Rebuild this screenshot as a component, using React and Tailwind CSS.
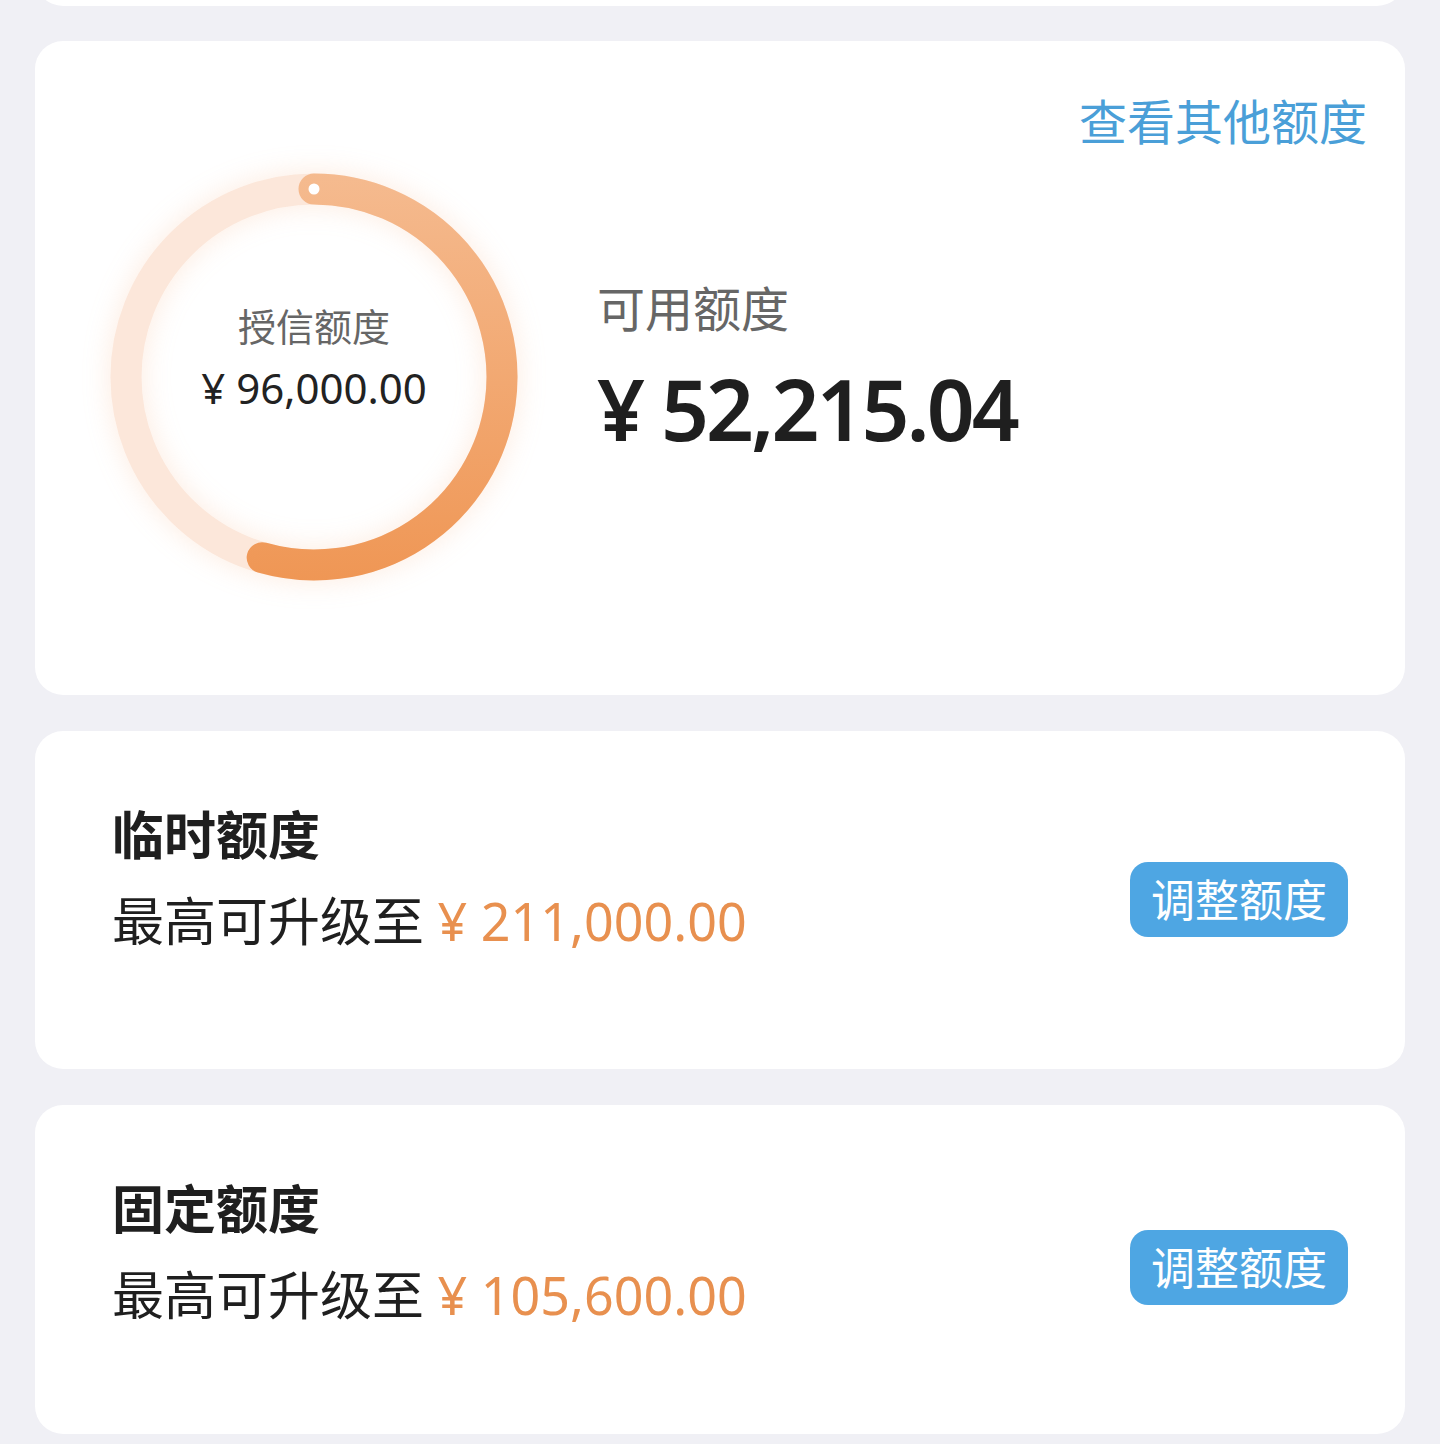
import React from "react";

const font = { fontFamily: '"Noto Sans", "Noto Sans CJK SC", sans-serif' };

function Ring() {
  const cx = 210, cy = 210, r = 188;
  const a = (196 * Math.PI) / 180;
  const ex = cx + r * Math.sin(a);
  const ey = cy - r * Math.cos(a);
  return (
    <svg width="420" height="420" viewBox="0 0 420 420" className="shrink-0 [filter:drop-shadow(0_0_14px_rgba(245,165,110,0.22))]">
      <defs>
        <linearGradient id="arcg" x1="0" y1="0" x2="0" y2="420" gradientUnits="userSpaceOnUse">
          <stop offset="0" stopColor="#f5bb90" />
          <stop offset="1" stopColor="#ef9654" />
        </linearGradient>
      </defs>
      <circle cx={cx} cy={cy} r={r} fill="none" stroke="#fce7da" strokeWidth="31" />
      <path
        d={`M ${cx} ${cy - r} A ${r} ${r} 0 1 1 ${ex} ${ey}`}
        fill="none"
        stroke="url(#arcg)"
        strokeWidth="31"
        strokeLinecap="round"
      />
      <circle cx={cx} cy={cy - r} r="5.5" fill="#ffffff" />
    </svg>
  );
}

function LimitCard({ title, amount, last }) {
  return (
    <div
      className={
        last
          ? "mt-[36px] flex items-start justify-between rounded-[28px] bg-white pl-[77px] pr-[57px] pt-[72px] pb-[107px]"
          : "mt-[36px] flex items-start justify-between rounded-[28px] bg-white pl-[77px] pr-[57px] pt-[72px] pb-[116px]"
      }
    >
      <div className="flex flex-col">
        <div className="text-[52px] font-bold leading-[64px] text-[#1f1f1f]">{title}</div>
        <div className="mt-[22px] text-[52px] leading-[64px] text-[#1f1f1f]">
          最高可升级至 <span className="text-[#e8904f]">¥ {amount}</span>
        </div>
      </div>
      <div
        className={
          last
            ? "mt-[53px] flex h-[75px] w-[218px] items-center justify-center rounded-[18px] bg-[#4ea6e3] text-[44px] text-white"
            : "mt-[59px] flex h-[75px] w-[218px] items-center justify-center rounded-[18px] bg-[#4ea6e3] text-[44px] text-white"
        }
      >
        调整额度
      </div>
    </div>
  );
}

export default function App() {
  return (
    <div className="min-h-[1444px] bg-[#f0f0f5] px-[35px] pb-[12px]" style={font}>
      <div className="-mt-[54px] h-[60px] rounded-[28px] bg-white" />
      <div className="mt-[35px] h-[654px] rounded-[28px] bg-white pt-[51px] pr-[38px]">
        <div className="flex justify-end">
          <div className="text-[48px] leading-[60px] text-[#4a9fd8]">查看其他额度</div>
        </div>
        <div className="mt-[15px] flex items-start pl-[69px]">
          <div className="relative">
            <Ring />
            <div className="absolute inset-0 flex flex-col items-center justify-center pb-[38px]">
              <div className="text-[38px] leading-[48px] text-[#666666]">授信额度</div>
              <div className="mt-[12px] text-[42px] leading-[52px] text-[#222222]">¥ 96,000.00</div>
            </div>
          </div>
          <div className="ml-[73px] mt-[112px] flex flex-col">
            <div className="text-[48px] leading-[60px] text-[#666666]">可用额度</div>
            <div className="mt-[20px] text-[84px] font-semibold leading-[100px] tracking-[-3px] text-[#1f1f1f]">¥ 52,215.04</div>
          </div>
        </div>
      </div>
      <LimitCard title="临时额度" amount="211,000.00" />
      <LimitCard title="固定额度" amount="105,600.00" last />
    </div>
  );
}
